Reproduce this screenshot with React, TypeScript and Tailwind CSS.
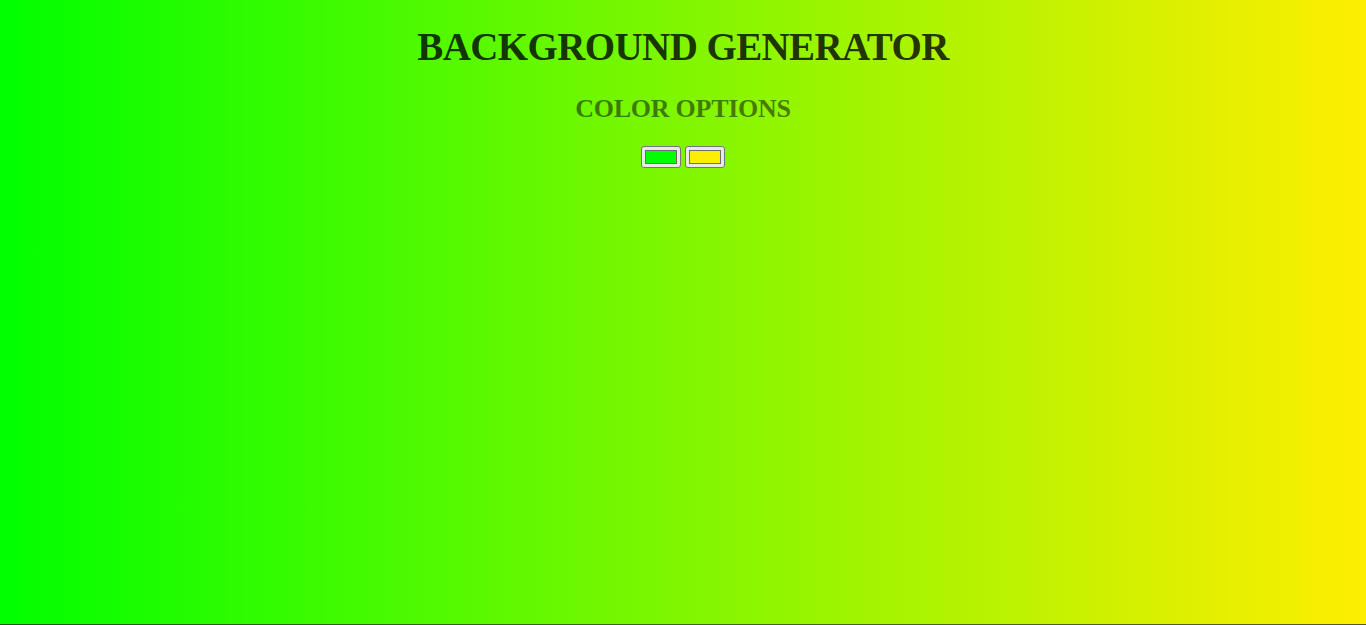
import React, { useState } from "react";

const App = () => {
  const [left, setLeft] = useState("#00ff00");
  const [right, setRight] = useState("#ffee00");

  return (
    <div className="w-full">
      {/* GRADIENT BODY */}
      <div
        className="h-[624px] w-full text-center uppercase font-['Liberation_Serif',serif]"
        style={{ background: `linear-gradient(to right, ${left}, ${right})` }}
      >
        <h1 className="pt-[24px] text-[39px] leading-[46px] font-bold tracking-[-0.6px] text-black/80">
          Background Generator
        </h1>
        <h3 className="mt-[24px] text-[26px] leading-[30px] font-bold tracking-[-0.25px] text-black/50">
          Color Options
        </h3>
        <div className="mt-[22px] flex justify-center gap-[4px]">
          {[
            { value: left, set: setLeft },
            { value: right, set: setRight },
          ].map((c, i) => (
            <label
              key={i}
              className="w-[40px] h-[22px] flex items-center justify-center bg-[#e9e9e9] border border-[#767676] rounded-[3px]"
            >
              <span
                className="w-[32px] h-[14px] border border-[#6f6f6f]"
                style={{ background: c.value }}
              />
              <input
                type="color"
                value={c.value}
                onChange={(e) => c.set(e.target.value)}
                className="hidden"
              />
            </label>
          ))}
        </div>
      </div>
      {/* BOTTOM EDGE */}
      <div className="h-px w-full bg-gradient-to-r from-[#1f5a08] via-[#3a6a10] to-[#5a5a10]" />
    </div>
  );
};

export default App;
